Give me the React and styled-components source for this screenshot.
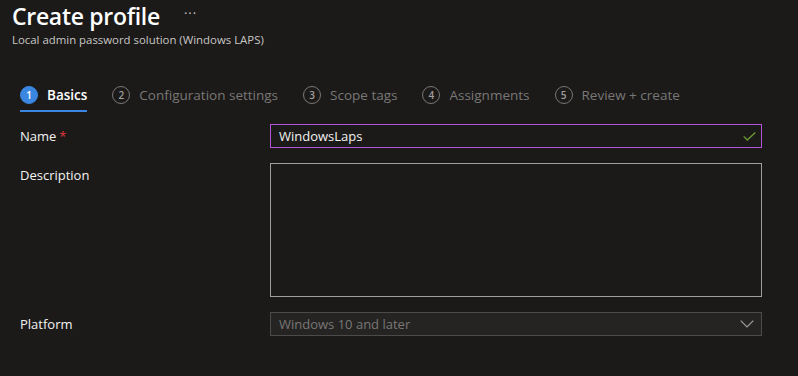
import React from "react";
import styled, { createGlobalStyle } from "styled-components";

const steps = [
  { n: 1, label: "Basics", active: true },
  { n: 2, label: "Configuration settings" },
  { n: 3, label: "Scope tags" },
  { n: 4, label: "Assignments" },
  { n: 5, label: "Review + create" },
];

const GlobalStyle = createGlobalStyle`
  html, body {
    margin: 0;
    background: #1b1a19;
  }
  body {
    font-family: "Segoe UI", "Open Sans", "Noto Sans", sans-serif;
    color: #f3f2f1;
  }
`;

const Page = styled.div`
  width: 798px;
  height: 376px;
  overflow: hidden;
  background: #1b1a19;
`;

const Header = styled.header`
  padding: 0 12px;
`;

const TitleRow = styled.div`
  display: flex;
  align-items: center;
  gap: 24px;
  height: 32px;
`;

const Title = styled.h1`
  margin: 0;
  font-size: 23px;
  font-weight: 600;
  color: #ffffff;
  line-height: 32px;
  letter-spacing: -0.3px;
`;

const More = styled.span`
  color: #c8c6c4;
  font-size: 13px;
  letter-spacing: 1px;
  margin-top: -6px;
`;

const Subtitle = styled.div`
  font-size: 11.4px;
  color: #c8c6c4;
  line-height: 16px;
`;

const Steps = styled.nav`
  display: flex;
  align-items: center;
  gap: 25px;
  margin: 32px 0 0 20px;
  height: 30px;
`;

const Step = styled.div`
  position: relative;
  display: flex;
  align-items: center;
  gap: 9px;
  height: 30px;
  font-size: 13.5px;
  font-weight: ${(p) => (p.$active ? 600 : 400)};
  color: ${(p) => (p.$active ? "#ffffff" : "#797775")};

  &::after {
    content: "";
    display: ${(p) => (p.$active ? "block" : "none")};
    position: absolute;
    left: 0;
    right: 0;
    bottom: -2px;
    height: 2px;
    background: #3a86e0;
  }
`;

const Circle = styled.span`
  box-sizing: border-box;
  width: 18px;
  height: 18px;
  border-radius: 50%;
  display: flex;
  align-items: center;
  justify-content: center;
  font-size: 10px;
  font-weight: 600;
  background: ${(p) => (p.$active ? "#3a86e0" : "transparent")};
  border: 1px solid ${(p) => (p.$active ? "#3a86e0" : "#797775")};
  color: ${(p) => (p.$active ? "#ffffff" : "#a19f9d")};
`;

const Form = styled.div`
  display: grid;
  grid-template-columns: 250px 492px;
  row-gap: 15px;
  margin: 14px 0 0 20px;
`;

const Label = styled.div`
  font-size: 13px;
  color: #f3f2f1;
  line-height: 24px;
`;

const Required = styled.span`
  color: #e3373b;
  margin-left: 3px;
`;

const Field = styled.div`
  box-sizing: border-box;
  height: ${(p) => p.$h || 24}px;
  border: 1px solid ${(p) => p.$border};
  background: ${(p) => p.$bg || "#1b1a19"};
  display: flex;
  align-items: center;
  justify-content: space-between;
  padding: 0 ${(p) => p.$pr || 8}px 0 8px;
  font-size: 13px;
  color: ${(p) => p.$color || "#f3f2f1"};
`;

export default function App() {
  return (
    <Page>
      <GlobalStyle />
      <Header>
        <TitleRow>
          <Title>Create profile</Title>
          <More>···</More>
        </TitleRow>
        <Subtitle>Local admin password solution (Windows LAPS)</Subtitle>
      </Header>

      <Steps>
        {steps.map((s) => (
          <Step key={s.n} $active={s.active}>
            <Circle $active={s.active}>{s.n}</Circle>
            {s.label}
          </Step>
        ))}
      </Steps>

      <Form>
        <Label>
          Name<Required>*</Required>
        </Label>
        <Field $border="#b553d6" $pr={5}>
          WindowsLaps
          <svg width="13" height="9" viewBox="0 0 13 9">
            <path d="M0.7 4.4 L4.3 8 L12.3 0.6" fill="none" stroke="#6b9a34" strokeWidth="1.3" />
          </svg>
        </Field>

        <Label>Description</Label>
        <Field $border="#a19f9d" $h={134} />

        <Label>Platform</Label>
        <Field $border="#4d4b49" $bg="#252423" $color="#797775" $pr={7}>
          Windows 10 and later
          <svg width="14" height="8" viewBox="0 0 14 8">
            <path d="M0.7 0.7 L7 7 L13.3 0.7" fill="none" stroke="#a19f9d" strokeWidth="1.2" />
          </svg>
        </Field>
      </Form>
    </Page>
  );
}
